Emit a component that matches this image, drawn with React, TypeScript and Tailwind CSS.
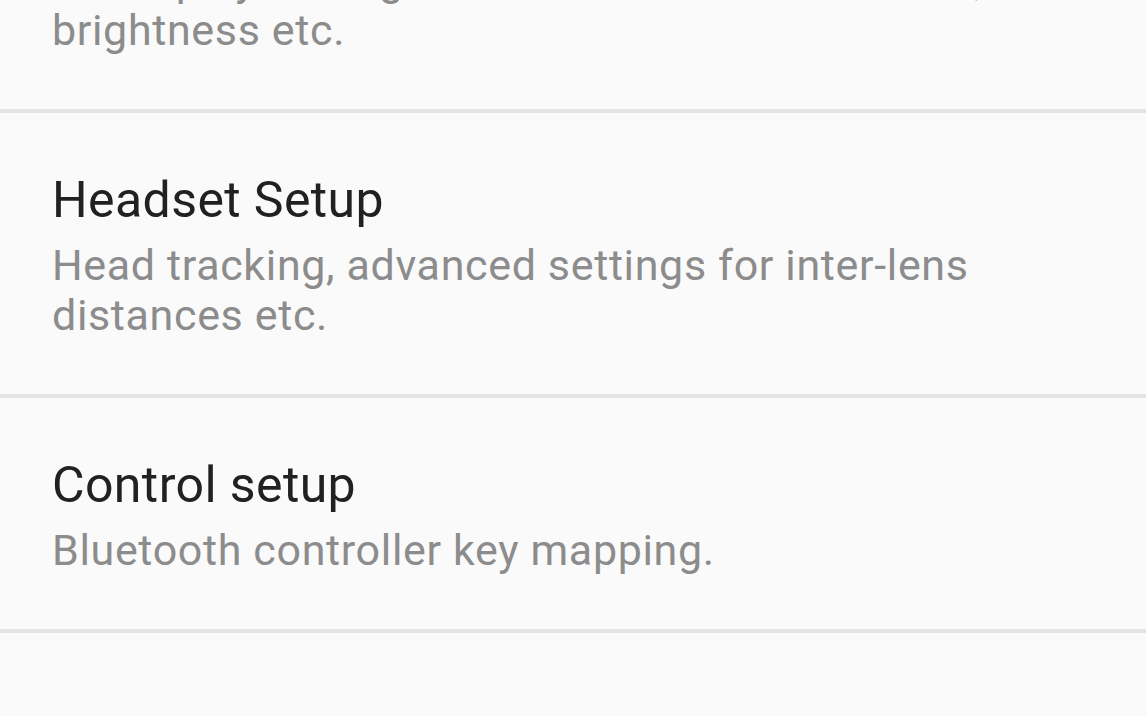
import React from "react";

type Item = { title: string; lines: string[] };

const items: Item[] = [
  {
    title: "Display Setup",
    lines: [
      "Field of view, lens distortion correction and",
      "3D display settings like resolution and contrast,",
      "brightness etc.",
    ],
  },
  {
    title: "Headset Setup",
    lines: ["Head tracking, advanced settings for inter-lens", "distances etc."],
  },
  {
    title: "Control setup",
    lines: ["Bluetooth controller key mapping."],
  },
];

export default function App() {
  return (
    <div
      className="w-[1146px] h-[716px] overflow-hidden bg-[#fafafa]"
      style={{ fontFamily: "Roboto, 'Noto Sans', sans-serif" }}
    >
      <div className="-mt-[222px] flex flex-col">
        {items.map((it) => (
          <div key={it.title} className="flex flex-col">
            <div className="pl-[52px] pr-6 pt-[58px] pb-[54px]">
              <div className="text-[50px] leading-[58px] tracking-[0.4px] text-[#212121]">
                {it.title}
              </div>
              <div className="mt-[11px] text-[43px] leading-[50px] tracking-[0.65px] text-[#8c8c8c]">
                {it.lines.map((l) => (
                  <div key={l} className="whitespace-nowrap">
                    {l}
                  </div>
                ))}
              </div>
            </div>
            <div className="h-[4px] bg-[#e4e4e4]" />
          </div>
        ))}
      </div>
    </div>
  );
}
